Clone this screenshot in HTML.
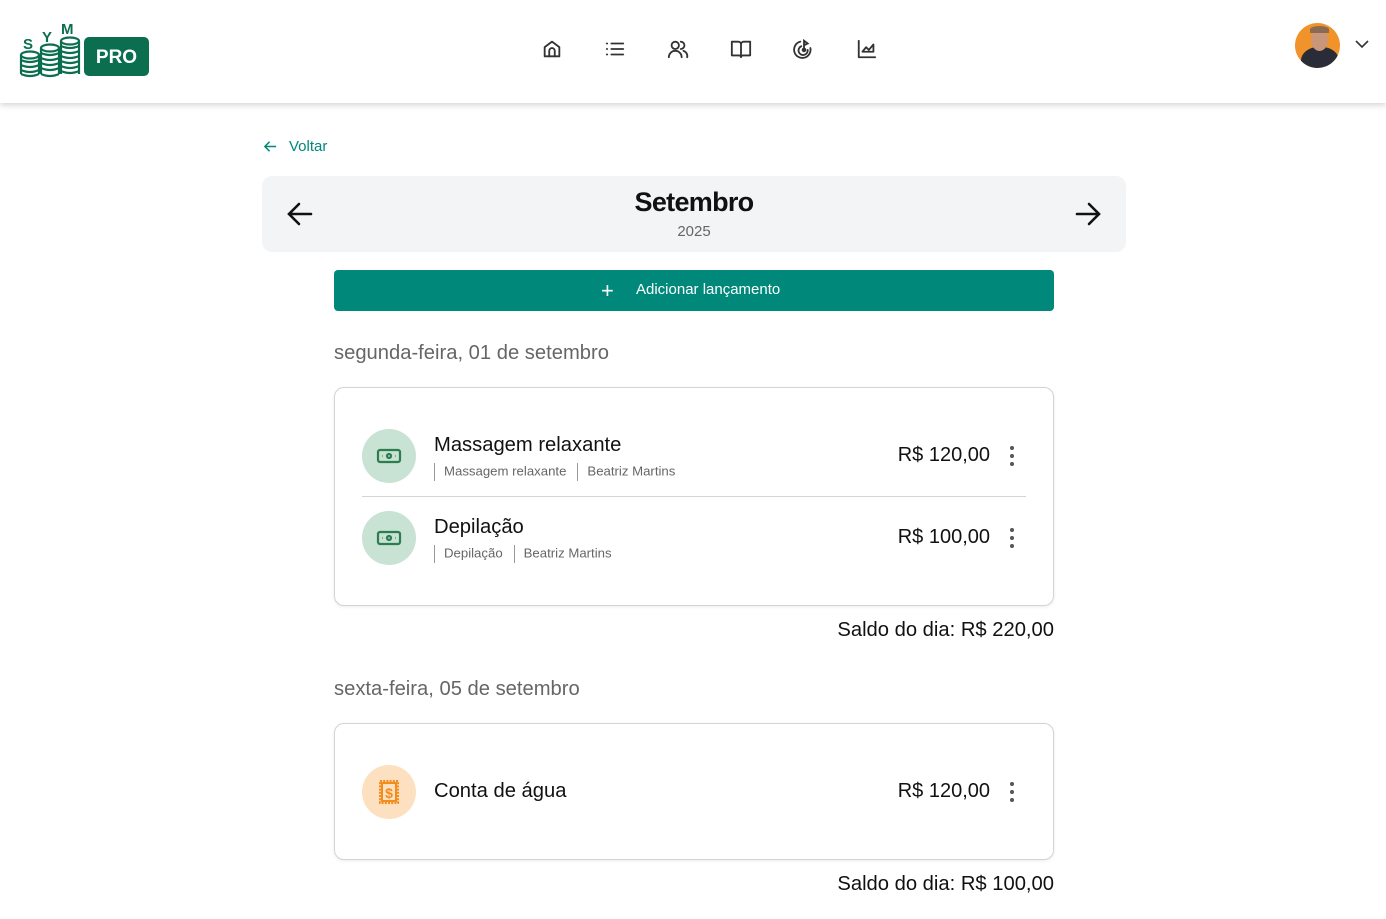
<!DOCTYPE html>
<html><head><meta charset="utf-8"><style>
*{box-sizing:border-box;margin:0;padding:0}
body{width:1386px;height:919px;overflow:hidden;background:#fff;font-family:"Liberation Sans",sans-serif;color:#111;position:relative}
.hdr{position:absolute;left:0;top:0;width:1386px;height:103px;background:#fff;box-shadow:0 2px 6px rgba(0,0,0,.18)}
.nav svg{position:absolute;top:38px}
.abs{position:absolute}
.card{position:absolute;left:334px;width:720px;border:1px solid #d4d4d4;border-radius:10px;background:#fff;box-shadow:0 1px 3px rgba(0,0,0,.08)}
.ic{position:absolute;width:54px;height:54px;border-radius:50%}
.t{position:absolute;font-size:20.2px;color:#111}
.s{position:absolute;font-size:13.2px;color:#666;white-space:nowrap}
.s i{display:inline-block;width:1px;height:18px;background:#999;vertical-align:middle;margin:0 9px 0 0}
.amt{position:absolute;font-size:20px;right:63px}
.dots{position:absolute;right:39px;width:4px}
.dots b{display:block;width:4px;height:4px;border-radius:50%;background:#555;margin-bottom:4px}
.date{position:absolute;left:334px;font-size:20.2px;color:#666}
.saldo{position:absolute;right:332px;font-size:20.2px}
</style></head><body>
<div class="hdr">
<svg class="abs" style="left:18px;top:20px" width="134" height="58" viewBox="0 0 134 58">
<g fill="#0b6e4f" font-family="Liberation Sans" font-weight="bold">
<text x="5" y="29" font-size="15">S</text><text x="24" y="22" font-size="15">Y</text><text x="43" y="14" font-size="15">M</text>
</g>
<g fill="none" stroke="#0b6e4f" stroke-width="2.2">
<ellipse cx="12" cy="35" rx="9" ry="3.5"/><path d="M3 35v19M21 35v19M3 40q9 4 18 0M3 45q9 4 18 0M3 50q9 4 18 0M3 54q9 4 18 0"/>
<ellipse cx="32" cy="28" rx="9" ry="3.5"/><path d="M23 28v26M41 28v26M23 33q9 4 18 0M23 38q9 4 18 0M23 43q9 4 18 0M23 48q9 4 18 0M23 54q9 4 18 0"/>
<ellipse cx="52" cy="21" rx="9" ry="3.5"/><path d="M43 21v33M61 21v33M43 26q9 4 18 0M43 31q9 4 18 0M43 36q9 4 18 0M43 41q9 4 18 0M43 46q9 4 18 0M43 51q9 4 18 0"/>
</g>
<rect x="66" y="17" width="65" height="39" rx="5" fill="#0b6e4f"/>
<text x="98.5" y="43" text-anchor="middle" fill="#fff" font-family="Liberation Sans" font-weight="bold" font-size="19">PRO</text>
</svg>
<div class="nav">
<svg style="left:541px" width="22" height="22" viewBox="0 0 24 24" fill="none" stroke="#333" stroke-width="2" stroke-linecap="round" stroke-linejoin="round"><path d="M4 10l8-6 8 6v10H4z"/><path d="M9 20v-6a3 3 0 0 1 6 0v6"/></svg>
<svg style="left:604px" width="22" height="22" viewBox="0 0 24 24" fill="none" stroke="#333" stroke-width="2" stroke-linecap="round"><path d="M8 6h13M8 12h13M8 18h13M3 6h.5M3 12h.5M3 18h.5"/></svg>
<svg style="left:667px" width="22" height="22" viewBox="0 0 24 24" fill="none" stroke="#333" stroke-width="2" stroke-linecap="round"><circle cx="9" cy="8" r="4"/><path d="M2 21a7 7 0 0 1 14 0M15 4a4 4 0 0 1 0 8M18 14a6 6 0 0 1 4 7"/></svg>
<svg style="left:730px" width="22" height="22" viewBox="0 0 24 24" fill="none" stroke="#333" stroke-width="2" stroke-linejoin="round"><path d="M2 4h7a3 3 0 0 1 3 3v14a2 2 0 0 0-2-2H2zM22 4h-7a3 3 0 0 0-3 3v14a2 2 0 0 1 2-2h8z"/></svg>
<svg style="left:793px" width="22" height="22" viewBox="0 0 24 24" fill="none" stroke="#333" stroke-width="2" stroke-linecap="round"><path d="M8 4a9 9 0 1 0 11 7M9 9a5 5 0 1 0 7 4"/><circle cx="12" cy="13" r="1.5"/><path d="M12 13V3l4 3-4 2"/></svg>
<svg style="left:856px" width="22" height="22" viewBox="0 0 24 24" fill="none" stroke="#333" stroke-width="2" stroke-linecap="round" stroke-linejoin="round"><path d="M3 3v18h18M7 15l4-5 3 3 5-6v8H7z"/></svg>
</div>
<div class="abs" style="left:1295px;top:23px;width:45px;height:45px;border-radius:50%;background:#f0932b;overflow:hidden">
<div class="abs" style="left:6px;top:24px;width:38px;height:30px;border-radius:45% 45% 0 0;background:#2a2d38"></div>
<div class="abs" style="left:16px;top:6px;width:17px;height:22px;border-radius:50%;background:#c9967a"></div>
<div class="abs" style="left:15px;top:3px;width:19px;height:7px;border-radius:50% 50% 0 0;background:#8a6a50"></div>
</div>
<svg class="abs" style="left:1355px;top:39px" width="14" height="10" viewBox="0 0 14 10" fill="none" stroke="#333" stroke-width="1.6"><path d="M1 2l6 6 6-6"/></svg>
</div>

<svg class="abs" style="left:263px;top:139px" width="15" height="15" viewBox="0 0 16 16" fill="none" stroke="#00897b" stroke-width="1.6"><path d="M14 8H2M7 3L2 8l5 5"/></svg>
<div class="abs" style="left:289px;top:138px;font-size:15px;color:#00897b">Voltar</div>

<div class="abs" style="left:262px;top:176px;width:864px;height:76px;background:#f3f4f6;border-radius:10px"></div>
<svg class="abs" style="left:286px;top:201px" width="28" height="26" viewBox="0 0 28 26" fill="none" stroke="#111" stroke-width="2.6" stroke-linecap="round"><path d="M25 13H3M13 3L3 13l10 10"/></svg>
<svg class="abs" style="left:1074px;top:201px" width="28" height="26" viewBox="0 0 28 26" fill="none" stroke="#111" stroke-width="2.6" stroke-linecap="round"><path d="M3 13h22M15 3l10 10-10 10"/></svg>
<div class="abs" style="left:262px;width:864px;top:187px;text-align:center;font-size:27px;font-weight:bold;letter-spacing:-0.7px">Setembro</div>
<div class="abs" style="left:262px;width:864px;top:223px;text-align:center;font-size:15px;color:#666">2025</div>

<div class="abs" style="left:334px;top:270px;width:720px;height:41px;background:#00897b;border-radius:4px;color:#fff;font-size:15px">
<span class="abs" style="left:267px;top:8px;font-size:22px;font-weight:300">+</span>
<span class="abs" style="left:302px;top:11px">Adicionar lançamento</span></div>

<div class="date" style="top:342px">segunda-feira, 01 de setembro</div>
<div class="card" style="top:387px;height:219px">
<div class="ic" style="left:27px;top:41px;background:#c8e2d4"><svg class="abs" style="left:14px;top:17px" width="26" height="20" viewBox="0 0 26 20" fill="none" stroke="#2e7d4f" stroke-width="2.2"><rect x="2" y="4" width="22" height="12" rx="2"/><circle cx="13" cy="10" r="2"/><path d="M6 10h.5M19.5 10h.5"/></svg></div>
<div class="t" style="left:99px;top:46px">Massagem relaxante</div>
<div class="s" style="left:99px;top:75px"><i></i>Massagem relaxante&nbsp;&nbsp; <i></i>Beatriz Martins</div>
<div class="amt" style="top:56px">R$ 120,00</div>
<div class="dots" style="top:58px"><b></b><b></b><b></b></div>
<div class="abs" style="left:27px;right:27px;top:108px;height:1px;background:#d4d4d4"></div>
<div class="ic" style="left:27px;top:123px;background:#c8e2d4"><svg class="abs" style="left:14px;top:17px" width="26" height="20" viewBox="0 0 26 20" fill="none" stroke="#2e7d4f" stroke-width="2.2"><rect x="2" y="4" width="22" height="12" rx="2"/><circle cx="13" cy="10" r="2"/><path d="M6 10h.5M19.5 10h.5"/></svg></div>
<div class="t" style="left:99px;top:128px">Depilação</div>
<div class="s" style="left:99px;top:157px"><i></i>Depilação&nbsp;&nbsp; <i></i>Beatriz Martins</div>
<div class="amt" style="top:138px">R$ 100,00</div>
<div class="dots" style="top:140px"><b></b><b></b><b></b></div>
</div>
<div class="saldo" style="top:619px">Saldo do dia: R$ 220,00</div>

<div class="date" style="top:678px">sexta-feira, 05 de setembro</div>
<div class="card" style="top:723px;height:137px">
<div class="ic" style="left:27px;top:41px;background:#fde0c0"><svg class="abs" style="left:16px;top:14px" width="22" height="26" viewBox="0 0 22 26" fill="none" stroke="#f28c1c" stroke-width="2"><path d="M2 2h18v22H2z" stroke-dasharray="2 1.2"/><rect x="4" y="4" width="14" height="18"/><text x="11" y="19" text-anchor="middle" font-size="14" font-weight="bold" fill="#f28c1c" stroke="none" font-family="Liberation Sans">$</text></svg></div>
<div class="t" style="left:99px;top:56px">Conta de água</div>
<div class="amt" style="top:56px">R$ 120,00</div>
<div class="dots" style="top:58px"><b></b><b></b><b></b></div>
</div>
<div class="saldo" style="top:873px">Saldo do dia: R$ 100,00</div>
</body></html>
